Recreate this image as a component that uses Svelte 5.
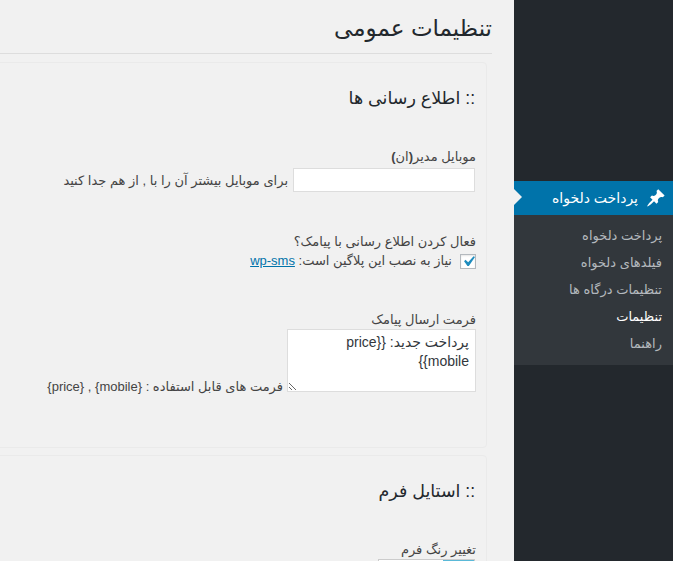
<script>
  const items = [
    { label: 'پرداخت دلخواه' },
    { label: 'فیلدهای دلخواه' },
    { label: 'تنظیمات درگاه ها' },
    { label: 'تنظیمات', current: true },
    { label: 'راهنما' }
  ];
</script>

<div class="page" dir="rtl">
  <aside class="side">
    <div class="active">
      <svg class="pin" viewBox="0 0 20 20" width="20" height="20" aria-hidden="true">
        <path fill="#fff" d="M10.44 3.02l1.82-1.82 6.36 6.35-1.83 1.82c-1.05-.68-2.48-.57-3.41.36l-.75.75c-.92.93-1.04 2.35-.35 3.41l-1.83 1.82-2.41-2.41-2.8 2.79c-.42.42-3.38 2.71-3.8 2.29s1.86-3.39 2.28-3.81l2.79-2.79L4.1 9.36l1.83-1.82c1.05.69 2.48.57 3.4-.36l.75-.75c.93-.92 1.05-2.35.36-3.41z"/>
      </svg>
      <span>پرداخت دلخواه</span>
      <i class="arrow"></i>
    </div>
    <ul class="sub">
      {#each items as item}
        <li class:current={item.current}>{item.label}</li>
      {/each}
    </ul>
  </aside>

  <main class="main">
    <h1>تنظیمات عمومی</h1>

    <section class="card first">
      <h2>:: اطلاع رسانی ها</h2>

      <div class="field mobile">
        <label for="m">موبایل مدیر<b>(</b>ان<b>)</b></label>
        <div class="line">
          <input id="m" type="text" />
          <span class="note">برای موبایل بیشتر آن را با , از هم جدا کنید</span>
        </div>
      </div>

      <div class="field sms">
        <div class="lab">فعال کردن اطلاع رسانی با پیامک؟</div>
        <div class="line check">
          <span class="box">
            <svg viewBox="0 0 20 20" width="21" height="21" aria-hidden="true">
              <path fill="#1e8cbe" d="M14.83 4.89l1.34.94-5.81 8.38H9.02L5.78 9.67l1.34-1.25 2.57 2.4z"/>
            </svg>
          </span>
          <span class="note">نیاز به نصب این پلاگین است: <a href="#wp">wp-sms</a></span>
        </div>
      </div>

      <div class="field fmt">
        <label for="t">فرمت ارسال پیامک</label>
        <div class="line area">
          <textarea id="t" readonly>پرداخت جدید: &#123;&#123;price
mobile&#125;&#125;</textarea>
          <span class="note">فرمت های قابل استفاده : &#123;mobile&#125; , &#123;price&#125;</span>
        </div>
      </div>
    </section>

    <section class="card second">
      <h2>:: استایل فرم</h2>
      <div class="field color">
        <div class="lab">تغییر رنگ فرم</div>
        <div class="swatch"><b></b><em></em></div>
      </div>
    </section>
  </main>
</div>

<style>
  :global(body) {
    margin: 0;
    background: #f1f1f1;
  }
  .page {
    display: flex;
    width: 673px;
    height: 561px;
    overflow: hidden;
    font-family: "Liberation Sans", "DejaVu Sans", sans-serif;
    font-size: 13px;
    color: #444;
    line-height: 18px;
  }
  .side {
    flex: 0 0 159px;
    background: #23282d;
    padding-top: 181px;
    box-sizing: border-box;
  }
  .active {
    position: relative;
    display: flex;
    align-items: center;
    height: 34px;
    background: #0073aa;
    color: #fff;
    font-size: 14px;
    padding-right: 7px;
    gap: 8px;
  }
  .arrow {
    position: absolute;
    left: 0;
    top: 8px;
    border: 8px solid transparent;
    border-right-width: 0;
    border-left: 8px solid #f1f1f1;
  }
  .sub {
    list-style: none;
    margin: 0;
    padding: 7px 11px 8px 0;
    background: #32373c;
    color: #b4b9be;
  }
  .sub li {
    height: 27px;
    line-height: 27px;
  }
  .sub li.current {
    color: #fff;
  }
  .main {
    flex: 0 0 514px;
    min-width: 0;
    padding-right: 22px;
    box-sizing: border-box;
  }
  h1 {
    margin: 0;
    height: 53px;
    font-size: 23px;
    font-weight: 400;
    line-height: 56px;
    color: #23282d;
    border-bottom: 1px solid #ddd;
  }
  .card {
    margin: 8px 5px 0 -4px;
    padding: 0 10px;
    border: 1px solid #eaeaea;
    border-radius: 4px;
    background: #f1f1f1;
    box-sizing: border-box;
  }
  .first {
    height: 386px;
  }
  .second {
    margin-top: 7px;
    height: 140px;
  }
  h2 {
    margin: 0 1px 0 0;
    font-size: 17.5px;
    font-weight: 400;
    line-height: 24px;
    color: #23282d;
    padding-top: 23px;
  }
  .field label,
  .lab {
    display: block;
    height: 18px;
    line-height: 18px;
  }
  .mobile {
    margin-top: 38px;
  }
  .line {
    display: flex;
    align-items: center;
    gap: 5px;
  }
  .mobile .line {
    margin-top: 2px;
  }
  .mobile .note {
    margin-top: 1px;
  }
  input {
    width: 182px;
    height: 24px;
    box-sizing: border-box;
    border: 1px solid #ddd;
    background: #fff;
    margin: 0 1px 0 0;
    padding: 0;
  }
  .sms {
    margin-top: 41px;
  }
  .check {
    margin-top: 1px;
    gap: 8px;
  }
  .box {
    flex: none;
    width: 16px;
    height: 15px;
    margin-top: 1px;
    border: 1px solid #b4b9be;
    background: #fff;
    box-sizing: border-box;
    display: flex;
    align-items: center;
    justify-content: center;
    box-shadow: inset 0 1px 2px rgba(0, 0, 0, 0.1);
  }
  .box svg {
    flex: none;
  }
  a {
    color: #0073aa;
  }
  .fmt {
    margin-top: 41px;
  }
  .area {
    align-items: flex-end;
    gap: 4px;
  }
  .area .note {
    margin-bottom: -4px;
  }
  textarea {
    width: 189px;
    height: 63px;
    box-sizing: border-box;
    margin: 0;
    padding: 3px 6px;
    border: 1px solid #ddd;
    background: #fff;
    color: #32373c;
    font: inherit;
    font-size: 14px;
    line-height: 19px;
    resize: both;
    overflow: hidden;
  }
  .color {
    margin-top: 38px;
  }
  .swatch {
    display: flex;
    width: 97px;
    height: 24px;
    margin-right: 1px;
    border: 1px solid #ccc;
    box-sizing: border-box;
  }
  .swatch b {
    width: 31px;
    background: #5ab9d8;
  }
  .swatch em {
    flex: 1;
    background: #fff;
  }
</style>
